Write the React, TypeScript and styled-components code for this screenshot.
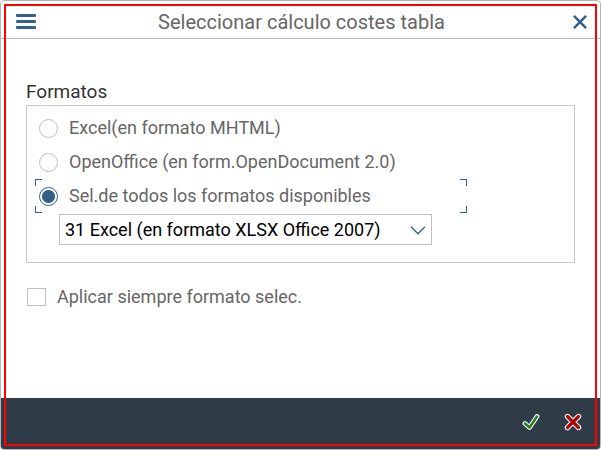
import React, { useState } from "react";
import styled, { createGlobalStyle } from "styled-components";

const GlobalStyle = createGlobalStyle`
  *, *::before, *::after { box-sizing: border-box; }
  body {
    margin: 0;
    background: #fff;
    font-family: Roboto, "Liberation Sans", sans-serif;
    font-size: 18px;
    line-height: 24px;
    color: #666;
  }
`;

const Dialog = styled.section`
  position: relative;
  display: flex;
  flex-direction: column;
  min-height: 100vh;
  border: 1px solid #b5b5ba;
  border-radius: 4px;
  overflow: hidden;

  &::after {
    content: "";
    position: absolute;
    inset: 3px;
    border: 2px solid #f00;
    pointer-events: none;
  }
`;

const Header = styled.header`
  display: flex;
  align-items: center;
  height: 38px;
  padding: 4px 13px 0 15px;
  border-bottom: 1px solid #b8b7c0;
`;

const Title = styled.h1`
  flex: 1;
  margin: 0;
  font-size: 20px;
  line-height: 24px;
  font-weight: 400;
  text-align: center;
`;

const IconButton = styled.button`
  display: flex;
  padding: 0;
  border: 0;
  background: none;
  cursor: pointer;
`;

const HeaderButton = styled(IconButton)<{ $align: "flex-start" | "flex-end" }>`
  width: 22px;
  justify-content: ${(p) => p.$align};
`;

const Content = styled.main`
  flex: 1;
  padding: 40px 25px 24px;
`;

const GroupTitle = styled.h2`
  margin: 0;
  font-size: 19px;
  line-height: 26px;
  font-weight: 400;
  color: #333;
`;

const Group = styled.div`
  border: 1px solid #c8c8c8;
  padding: 5px 8px 17px;
  margin-bottom: 22px;
`;

const Corner = styled.span<{ $v: "top" | "bottom"; $h: "left" | "right" }>`
  position: absolute;
  width: 7px;
  height: 7px;
  ${(p) => p.$v}: 0;
  ${(p) => p.$h}: 0;
  border: 0 solid #346187;
  border-${(p) => p.$v}-width: 1px;
  border-${(p) => p.$h}-width: 1px;
`;

const Option = styled.label`
  position: relative;
  display: flex;
  align-items: center;
  gap: 11px;
  width: 432px;
  max-width: 100%;
  height: 34px;
  padding: 0 4px;
`;

const Radio = styled.input`
  appearance: none;
  flex: none;
  width: 19px;
  height: 19px;
  margin: 0;
  border: 1px solid #bfbfbf;
  border-radius: 50%;
  background: #fff;
  outline: none;

  &:checked {
    border-color: #346187;
    background: radial-gradient(circle, #346187 0 6px, #fff 7px);
  }
`;

const SelectBox = styled.div`
  position: relative;
  width: 373px;
  max-width: 100%;
  margin: 1px 0 0 24px;
`;

const Select = styled.select`
  appearance: none;
  display: block;
  width: 100%;
  height: 31px;
  padding: 0 32px 0 5px;
  border: 1px solid #bfbfbf;
  border-radius: 0;
  background: #fff;
  color: #000;
  font: inherit;
`;

const Chevron = styled.svg`
  position: absolute;
  right: 6px;
  top: 12px;
  pointer-events: none;
`;

const CheckLabel = styled.label`
  display: flex;
  align-items: center;
  gap: 11px;
  padding-left: 1px;
  width: fit-content;
`;

const Checkbox = styled.input`
  appearance: none;
  width: 19px;
  height: 18px;
  margin: 0;
  border: 1px solid #bfbfbf;
  background: #fff;

  &:checked {
    box-shadow: inset 0 0 0 4px #fff;
    background: #346187;
  }
`;

const Footer = styled.footer`
  display: flex;
  align-items: center;
  justify-content: flex-end;
  gap: 24px;
  height: 51px;
  padding: 0 18px 3px;
  background: #2f3c48;
`;

const options = [
  "Excel(en formato MHTML)",
  "OpenOffice (en form.OpenDocument 2.0)",
  "Sel.de todos los formatos disponibles",
];

export default function App() {
  const [selected, setSelected] = useState(2);

  return (
    <>
      <GlobalStyle />
      <Dialog role="dialog" aria-labelledby="dialog-title">
        <Header>
          <HeaderButton $align="flex-start" aria-label="Menú">
            <svg width="20" height="15" viewBox="0 0 20 15" fill="#346187">
              <rect width="20" height="3" rx="1" />
              <rect y="6" width="20" height="3" rx="1" />
              <rect y="12" width="20" height="3" rx="1" />
            </svg>
          </HeaderButton>
          <Title id="dialog-title">Seleccionar cálculo costes tabla</Title>
          <HeaderButton $align="flex-end" aria-label="Cerrar">
            <svg width="14" height="14" viewBox="0 0 14 14" fill="none" stroke="#346187" strokeWidth="2.5">
              <path d="M.9 .9 13.1 13.1M13.1 .9 .9 13.1" />
            </svg>
          </HeaderButton>
        </Header>
        <Content>
          <GroupTitle id="formats-title">Formatos</GroupTitle>
          <Group role="radiogroup" aria-labelledby="formats-title">
            {options.map((text, index) => (
              <Option key={text}>
                <Radio
                  type="radio"
                  name="format"
                  checked={selected === index}
                  onChange={() => setSelected(index)}
                />
                {text}
                {selected === index && (
                  <>
                    <Corner $v="top" $h="left" />
                    <Corner $v="top" $h="right" />
                    <Corner $v="bottom" $h="left" />
                    <Corner $v="bottom" $h="right" />
                  </>
                )}
              </Option>
            ))}
            <SelectBox>
              <Select aria-label="Formato">
                <option>31 Excel (en formato XLSX Office 2007)</option>
              </Select>
              <Chevron width="16" height="9" viewBox="0 0 16 9" fill="none" stroke="#346187" strokeWidth="1.3">
                <path d="M1 .8 8 7.8 15 .8" />
              </Chevron>
            </SelectBox>
          </Group>
          <CheckLabel>
            <Checkbox type="checkbox" />
            Aplicar siempre formato selec.
          </CheckLabel>
        </Content>
        <Footer>
          <IconButton aria-label="Aceptar">
            <svg width="18" height="18" viewBox="0 0 18 18" fill="none" strokeLinecap="round" strokeLinejoin="round">
              <path d="M3 10.5 7.5 14.5 15 3.5" stroke="#fff" strokeWidth="4.8" />
              <path d="M3 10.5 7.5 14.5 15 3.5" stroke="#2b7d2b" strokeWidth="2.6" />
            </svg>
          </IconButton>
          <IconButton aria-label="Cancelar">
            <svg width="18" height="18" viewBox="0 0 18 18" fill="none" strokeLinecap="round">
              <path d="M3.5 3.5 14.5 14.5M14.5 3.5 3.5 14.5" stroke="#fff" strokeWidth="5.4" />
              <path d="M3.5 3.5 14.5 14.5M14.5 3.5 3.5 14.5" stroke="#b00000" strokeWidth="3.2" />
            </svg>
          </IconButton>
        </Footer>
      </Dialog>
    </>
  );
}
